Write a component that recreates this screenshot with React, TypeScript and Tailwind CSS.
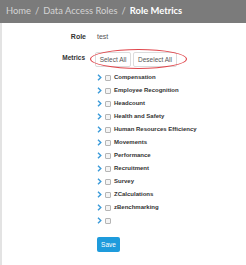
import { useState } from "react";

const metrics = [
  "Compensation",
  "Employee Recognition",
  "Headcount",
  "Health and Safety",
  "Human Resources Efficiency",
  "Movements",
  "Performance",
  "Recruitment",
  "Survey",
  "ZCalculations",
  "zBenchmarking",
  "",
];

function Chevron() {
  return (
    <svg width="5" height="7" viewBox="0 0 5 7" className="shrink-0">
      <path d="M1 0.8 L3.8 3.5 L1 6.2" fill="none" stroke="#3a9ad9" strokeWidth="1.4" />
    </svg>
  );
}

export default function App() {
  const [checked, setChecked] = useState<Record<number, boolean>>({});

  return (
    <div className="w-[246px] h-[265px] bg-white font-['Liberation_Sans',sans-serif] overflow-hidden">
      {/* breadcrumb */}
      <div className="h-[23px] bg-[#7b7b7b] flex items-center pl-[6px] text-[9.4px] font-['Lato',sans-serif] text-[#d4d4d4]">
        <span>Home</span>
        <span className="mx-[4px]">/</span>
        <span>Data Access Roles</span>
        <span className="mx-[4px]">/</span>
        <span className="text-white font-bold">Role Metrics</span>
      </div>

      <div className="border-l-2 border-[#e3e3e3] h-[242px] pt-[8px]">
        <div className="flex items-center h-[12px]">
          <div className="w-[84px] text-right text-[7px] font-bold text-[#333]">Role</div>
          <div className="ml-[11px] text-[7px] text-[#555]">test</div>
        </div>

        <div className="flex mt-[6px]">
          <div className="w-[83px] text-right text-[6.5px] font-bold text-[#333] pt-[4px]">Metrics</div>
          <div className="ml-[12px]">
            <div className="relative flex gap-[2px] ml-[-2px] mt-[3px] h-[15px]">
              <button className="h-[15px] w-[36px] bg-white border border-[#dcdcdc] rounded-[2px] text-[6.5px] text-[#555]">
                Select All
              </button>
              <button className="h-[15px] w-[44px] bg-white border border-[#dcdcdc] rounded-[2px] text-[6.5px] text-[#555]">
                Deselect All
              </button>
              <div className="absolute left-[-5px] top-[-3px] w-[97px] h-[20px] rounded-[50%] border border-[#e0454b]" />
            </div>

            <div className="mt-[4px] flex flex-col">
              {metrics.map((m, i) => (
                <div key={i} className="h-[13px] flex items-center gap-[3px]">
                  <Chevron />
                  <input
                    type="checkbox"
                    checked={!!checked[i]}
                    onChange={() => setChecked({ ...checked, [i]: !checked[i] })}
                    className="w-[6px] h-[6px] m-0 appearance-none border border-[#b5b5b5] bg-[#f4f4f4] rounded-[1px]"
                  />
                  <span className="text-[6px] font-bold text-[#333]">{m}</span>
                </div>
              ))}
            </div>

            <button className="mt-[10px] h-[15px] w-[23px] bg-[#1e9bdc] rounded-[2px] text-[6.5px] text-white">
              Save
            </button>
          </div>
        </div>
      </div>
    </div>
  );
}
